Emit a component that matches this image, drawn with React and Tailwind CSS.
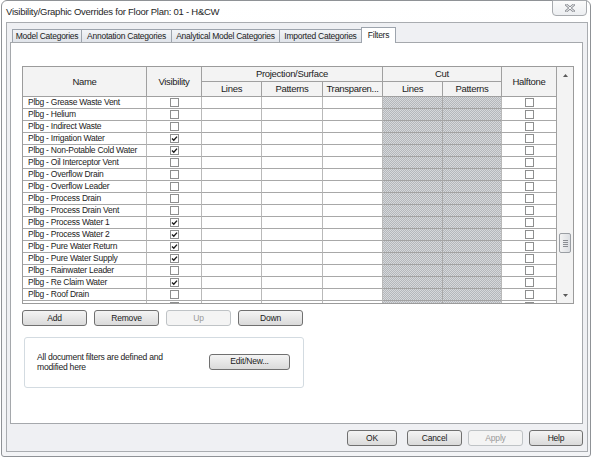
import React from "react";

const rows = [
  ["Plbg - Grease Waste Vent", false],
  ["Plbg - Helium", false],
  ["Plbg - Indirect Waste", false],
  ["Plbg - Irrigation Water", true],
  ["Plbg - Non-Potable Cold Water", true],
  ["Plbg - Oil Interceptor Vent", false],
  ["Plbg - Overflow Drain", false],
  ["Plbg - Overflow Leader", false],
  ["Plbg - Process Drain", false],
  ["Plbg - Process Drain Vent", false],
  ["Plbg - Process Water 1", true],
  ["Plbg - Process Water 2", true],
  ["Plbg - Pure Water Return", true],
  ["Plbg - Pure Water Supply", true],
  ["Plbg - Rainwater Leader", false],
  ["Plbg - Re Claim Water", true],
  ["Plbg - Roof Drain", false],
  ["", false],
];

function Check({ checked }) {
  return (
    <div className="w-[9px] h-[9px] border border-[#8e8f8f] bg-white flex items-center justify-center">
      {checked && (
        <svg width="7" height="7" viewBox="0 0 7 7">
          <path d="M1 3.4 L2.8 5.2 L6 1.6" fill="none" stroke="#1a1a1a" strokeWidth="1.4" />
        </svg>
      )}
    </div>
  );
}

function Btn({ label, className, disabled }) {
  return (
    <div
      className={
        "h-[16px] flex items-center justify-center rounded-[3px] border text-[8.5px] tracking-[-0.2px] leading-none whitespace-nowrap " +
        (disabled
          ? "border-[#bfc3c6] bg-[#f4f4f4] text-[#9a9a9a] "
          : "border-[#707070] bg-linear-to-b from-[#f4f4f4] to-[#dadada] text-[#1b1b1b] ") +
        className
      }
    >
      {label}
    </div>
  );
}

const cutBg =
  "bg-[repeating-conic-gradient(#b4b7bb_0%_25%,#d6d8db_0%_50%)] bg-[length:2px_2px]";

export default function App() {
  return (
    <div className="w-[594px] h-[457px] bg-white overflow-hidden font-['Liberation_Sans',sans-serif] text-[#1b1b1b]">
      <div className="ml-[1px] w-[590px] h-[457px] border border-[#8f9296] rounded-t-[6px] rounded-b-[3px] bg-linear-to-b from-[#ffffff] to-[#f3f4f6] flex flex-col pl-[4px] pr-[2px] pb-[4px]">
        {/* Title bar */}
        <div className="h-[21px] flex justify-between">
          <div className="flex items-center text-[9.5px] tracking-[-0.25px] text-[#1e1e1e] pt-[1px] whitespace-nowrap">
            Visibility/Graphic Overrides for Floor Plan: 01 - H&amp;CW
          </div>
          <div className="-mt-px mr-[1px] w-[35px] h-[16px] border border-[#a7aaae] rounded-b-[4px] bg-linear-to-b from-[#fbfbfb] to-[#eceef1] flex items-center justify-center">
            <svg width="10" height="8" viewBox="0 0 10 8">
              <path d="M1.5 1 L8.5 7 M8.5 1 L1.5 7" stroke="#8d9096" strokeWidth="2.6" strokeLinecap="square" />
              <path d="M1.5 1 L8.5 7 M8.5 1 L1.5 7" stroke="#ffffff" strokeWidth="1" strokeLinecap="square" />
            </svg>
          </div>
        </div>

        {/* Client area */}
        <div className="flex-1 border border-[#a9acb0] bg-[#eff0f3] flex flex-col">
          {/* tabs */}
          <div className="h-[19px] flex items-end pl-[5px] text-[8.5px] tracking-[-0.25px] leading-none whitespace-nowrap">
            <div className="w-[69px] h-[13px] border-l border-t border-[#9da4ad] bg-linear-to-b from-[#f2f4f7] to-[#e0e4ea] flex items-center justify-center">Model Categories</div>
            <div className="w-[90px] h-[13px] border-l border-t border-[#9da4ad] bg-linear-to-b from-[#f2f4f7] to-[#e0e4ea] flex items-center justify-center">Annotation Categories</div>
            <div className="w-[108px] h-[13px] border-l border-t border-[#9da4ad] bg-linear-to-b from-[#f2f4f7] to-[#e0e4ea] flex items-center justify-center">Analytical Model Categories</div>
            <div className="w-[82px] h-[13px] border-l border-t border-[#9da4ad] bg-linear-to-b from-[#f2f4f7] to-[#e0e4ea] flex items-center justify-center">Imported Categories</div>
            <div className="relative z-10 -mb-px w-[35px] h-[16px] border-l border-t border-r border-[#9da4ad] bg-white flex items-start pt-[3px] justify-center">Filters</div>
          </div>

          {/* panel */}
          <div className="ml-[3px] mr-[4px] h-[382px] border border-[#a5a8ac] bg-white pl-[11px] pt-[23px]">
            {/* table */}
            <div className="w-[552px] h-[238px] border border-[#9b9b9b] flex">
              <div className="w-[533px] flex flex-col">
                {/* header */}
                <div className="grid grid-cols-[124px_55px_60px_61px_60px_60px_59px_54px] grid-rows-[15px_15px] bg-[#f3f3f3] text-[9.5px] tracking-[-0.3px] leading-none whitespace-nowrap">
                  <div className="row-span-2 border-r border-b border-[#a0a0a0] flex items-center justify-center">Name</div>
                  <div className="row-span-2 border-r border-b border-[#a0a0a0] flex items-center justify-center">Visibility</div>
                  <div className="col-span-3 border-r border-b border-[#a0a0a0] flex items-center justify-center">Projection/Surface</div>
                  <div className="col-span-2 border-r border-b border-[#a0a0a0] flex items-center justify-center">Cut</div>
                  <div className="row-span-2 border-b border-[#a0a0a0] flex items-center justify-center">Halftone</div>
                  <div className="border-r border-b border-[#a0a0a0] flex items-center justify-center">Lines</div>
                  <div className="border-r border-b border-[#a0a0a0] flex items-center justify-center">Patterns</div>
                  <div className="border-r border-b border-[#a0a0a0] flex items-center justify-center">Transparen...</div>
                  <div className="border-r border-b border-[#a0a0a0] flex items-center justify-center">Lines</div>
                  <div className="border-r border-b border-[#a0a0a0] flex items-center justify-center">Patterns</div>
                </div>
                {/* body */}
                <div className="h-[206px] overflow-hidden text-[8.5px] tracking-[-0.25px] leading-none">
                  {rows.map(([name, vis], i) => (
                    <div key={i} className="grid grid-cols-[124px_55px_60px_61px_60px_60px_59px_54px] h-[12px]">
                      <div className="border-r border-b border-r-[#b9b9b9] border-b-[#a8a8a8] pl-[5px] flex items-center whitespace-nowrap overflow-hidden">{name}</div>
                      <div className="border-r border-b border-r-[#b9b9b9] border-b-[#a8a8a8] flex items-center justify-center"><Check checked={vis} /></div>
                      <div className="border-r border-b border-r-[#b9b9b9] border-b-[#a8a8a8]" />
                      <div className="border-r border-b border-r-[#b9b9b9] border-b-[#a8a8a8]" />
                      <div className="border-r border-b border-r-[#b9b9b9] border-b-[#a8a8a8]" />
                      <div className={"border-r border-b border-r-[#a9a9a9] border-b-[#a2a2a2] " + cutBg} />
                      <div className={"border-r border-b border-r-[#b9b9b9] border-b-[#a2a2a2] " + cutBg} />
                      <div className="border-b border-b-[#a8a8a8] flex items-center justify-center"><Check checked={false} /></div>
                    </div>
                  ))}
                </div>
              </div>
              {/* scrollbar */}
              <div className="w-[17px] border-l border-[#a0a0a0] bg-[#f3f3f3] flex flex-col">
                <div className="h-[16px] flex items-center justify-center">
                  <svg width="5" height="3" viewBox="0 0 5 3"><path d="M0 3 L2.5 0 L5 3 Z" fill="#5a5a5a" /></svg>
                </div>
                <div className="flex-1 flex flex-col items-center">
                  <div className="mt-[150px] w-[12px] h-[20px] border border-[#9a9ea3] rounded-[2px] bg-linear-to-r from-[#f3f3f3] to-[#dcdfe3] flex flex-col items-center justify-center gap-[1px]">
                    <div className="w-[5px] h-px bg-[#8a8d92]" />
                    <div className="w-[5px] h-px bg-[#8a8d92]" />
                    <div className="w-[5px] h-px bg-[#8a8d92]" />
                    <div className="w-[5px] h-px bg-[#8a8d92]" />
                  </div>
                </div>
                <div className="h-[16px] flex items-center justify-center">
                  <svg width="5" height="3" viewBox="0 0 5 3"><path d="M0 0 L5 0 L2.5 3 Z" fill="#5a5a5a" /></svg>
                </div>
              </div>
            </div>

            {/* buttons */}
            <div className="mt-[6px] flex gap-[7px]">
              <Btn label="Add" className="w-[65px]" />
              <Btn label="Remove" className="w-[65px]" />
              <Btn label="Up" className="w-[65px]" disabled />
              <Btn label="Down" className="w-[65px]" />
            </div>

            {/* group */}
            <div className="mt-[11px] ml-[2px] w-[280px] h-[51px] border border-[#d3dbe1] rounded-[3px] bg-white flex items-center justify-between pl-[12px] pr-[13px]">
              <div className="text-[8.6px] tracking-[-0.25px] leading-[10px] -mt-[2px]">
                All document filters are defined and
                <br />
                modified here
              </div>
              <Btn label="Edit/New..." className="w-[81px] -mt-[2px]" />
            </div>
          </div>

          {/* bottom buttons */}
          <div className="mt-[6px] flex justify-end pr-[4px]">
            <Btn label="OK" className="w-[50px]" />
            <Btn label="Cancel" className="w-[55px] ml-[10px]" />
            <Btn label="Apply" className="w-[55px] ml-[6px]" disabled />
            <Btn label="Help" className="w-[54px] ml-[6px]" />
          </div>
        </div>
      </div>
    </div>
  );
}
